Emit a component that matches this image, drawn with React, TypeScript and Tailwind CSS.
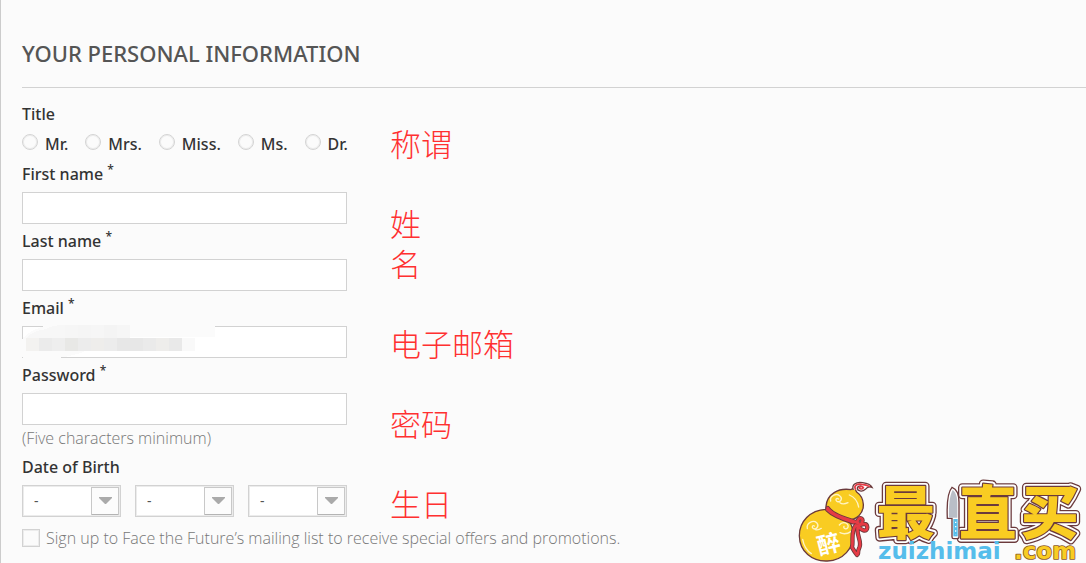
import { useId } from 'react'
import type { ReactNode } from 'react'

const TITLES = ['Mr.', 'Mrs.', 'Miss.', 'Ms.', 'Dr.']

// Colours of the pixelated blocks that hide the address, left to right.
const MOSAIC_TOP = ['#f6f6f6', '#f5f5f5', '#f6f6f6', '#f4f4f4', '#f6f6f6']
const MOSAIC_ROW = [
  '#f3f2f0',
  '#ebebeb',
  '#eeeeee',
  '#e8e8e6',
  '#ececec',
  '#eeedeb',
  '#ececec',
  '#e7e7e7',
  '#e7e7e7',
  '#eaeaea',
  '#eeedeb',
  '#e9e9e9',
  '#f9f9f9',
]

function Mosaic() {
  return (
    <svg
      className="pointer-events-none absolute -left-1 -top-2"
      width="200"
      height="46"
      shapeRendering="crispEdges"
      aria-hidden="true"
    >
      <path
        d="M36 6H197V19H70V32Q60 37 40 40V46H8Q-1 32 5 20Q14 10 36 6Z"
        fill="#fbfbfb"
      />
      <path d="M47 7V20H8Q14 13 28 11Q34 7 47 7Z" fill="#f7f7f7" />
      {MOSAIC_TOP.map((c, i) => (
        <rect key={i} x={47 + i * 13} y="7" width="13" height="13" fill={c} />
      ))}
      {MOSAIC_ROW.map((c, i) => (
        <rect key={i} x={8 + i * 13} y="20" width="13" height="13" fill={c} />
      ))}
    </svg>
  )
}

function Field({
  label,
  type = 'text',
  children,
}: {
  label: string
  type?: string
  children?: ReactNode
}) {
  const id = useId()

  return (
    <div className="mb-0.5">
      <label htmlFor={id} className="mb-[3px] block font-medium">
        {label} <sup className="text-xs">*</sup>
      </label>
      <div className="relative">
        <input
          id={id}
          type={type}
          className="block h-8 w-full border border-[#d2d2d2] bg-white px-3 text-sm outline-none"
        />
        {children}
      </div>
    </div>
  )
}

function DateSelect({ label }: { label: string }) {
  return (
    <div className="relative flex-1">
      <select
        aria-label={label}
        className="block h-8 w-full appearance-none border border-[#d2d2d2] bg-white pl-[11px] text-sm text-[#555] shadow-[inset_0_0_0_1px_#ececec] outline-none"
      >
        <option>-</option>
      </select>
      <svg
        className="pointer-events-none absolute right-0.5 top-0.5"
        width="28"
        height="28"
        aria-hidden="true"
      >
        <rect x=".5" y=".5" width="27" height="27" fill="#fcfcfc" stroke="#c8c8c8" />
        <path d="M1 27.5H27" stroke="#b4b4b4" />
        <path d="M8 10H21V11L15 17H14L8 11Z" fill="#aaa" />
      </svg>
    </div>
  )
}

// Painted bottom to top: outer rim, white band, face with its inner rim.
const GLYPH_LAYERS = [
  'fill-[#6b3a3c] stroke-[#6b3a3c] [stroke-width:26]',
  'fill-white stroke-white [stroke-width:18]',
  'fill-[#f9cc22] stroke-[#6b3a3c] [stroke-width:7] [paint-order:stroke]',
]

const RIBBON =
  'M113 99C126 119 158 129 205 144M190 142C164 134 130 123 112 104M201 143C206 119 227 131 213 147L203 155C217 145 231 143 232 157C231 174 212 166 202 151M197 151C181 171 191 200 186 217Q194 231 201 240M203 157C199 182 215 197 209 215Q204 225 204 236'

function Logo() {
  return (
    <svg
      className="absolute bottom-0 right-0"
      width="296"
      height="88"
      viewBox="0 0 888 264"
      role="img"
      aria-label="最值买 zuizhimai.com"
    >
      {/* gourd */}
      <g stroke="#6b3a3c" strokeWidth="4">
        <path
          d="M108 103C60 105 28 140 28 182C29 230 66 260 112 258C160 256 191 220 190 176C188 154 180 140 170 135C200 136 221 115 220 88C219 70 210 58 200 51L193 38L183 44C145 38 111 57 108 94Z"
          fill="#f9cc22"
        />
        <path
          d="M190 45C184 29 197 20 218 23C232 25 242 29 246 37C238 33 232 36 226 43C216 52 202 48 202 40C202 32 214 31 219 37"
          fill="#fff"
        />
      </g>
      <g fill="none" stroke="#e63b45" strokeWidth="5" strokeLinecap="round">
        <path d="M196 42C191 31 202 26 215 28Q230 29 238 34" />
        <path d="M207 38Q214 31 220 38Q214 46 207 38" />
      </g>
      <g fill="none" stroke="#fff4c4" strokeWidth="4" strokeLinecap="round">
        <path d="M122 78C118 62 139 54 149 62C160 70 151 84 141 79C134 74 140 68 146 72M150 83Q158 90 174 83" />
        <path d="M52 161C48 143 70 134 80 143C89 153 79 166 69 160C64 155 69 150 73 153M76 164Q86 166 94 160" />
        <path d="M148 150C158 137 178 144 174 157C170 166 158 160 162 154M150 173Q166 181 184 169" />
        <path d="M178 60Q201 69 206 96M38 193Q43 222 64 236" />
      </g>
      <g fill="none" strokeLinecap="round" strokeLinejoin="round">
        <path d={RIBBON} stroke="#6b3a3c" strokeWidth="13" />
        <path d={RIBBON} stroke="#e63b45" strokeWidth="8" />
      </g>
      <text
        x="82"
        y="232"
        transform="rotate(-14 118 210)"
        className="fill-white font-['Noto_Sans_CJK_SC',sans-serif] text-[69px] font-bold"
      >
        醉
      </text>

      {/* name */}
      {GLYPH_LAYERS.map((layer) => (
        <g
          key={layer}
          strokeLinejoin="round"
          className={`font-['Noto_Sans_CJK_SC',sans-serif] text-[174px] font-black ${layer}`}
        >
          <text x="260" y="177">
            最
          </text>
          <text x="506" y="177">
            直
          </text>
          <text x="692" y="177">
            买
          </text>
        </g>
      ))}

      {/* knife */}
      <path
        d="M486 37C500 42 507 60 507 82V186Q507 191 501 191H491Q486 191 486 186V130H472C470 86 474 50 486 37Z"
        fill="#fff"
        stroke="#6b3a3c"
        strokeWidth="4"
      />
      <path d="M488 45C498 52 502 68 502 86V128H477C476 89 479 61 488 45Z" fill="#b9bec7" />
      <path d="M490 132H503V184H490Z" fill="#55bdeb" />
      <path d="M497 140V180" stroke="#fff" strokeWidth="4" strokeDasharray="4 9" />

      {/* address */}
      <text
        x="264"
        y="251"
        className="fill-[#55bdeb] font-['DejaVu_Sans',sans-serif] text-[69px] font-bold"
      >
        zuizhimai
      </text>
      <text
        x="672"
        y="251"
        strokeLinejoin="round"
        className="fill-[#f9cc22] stroke-[#8a5a2c] stroke-[5] font-['DejaVu_Sans',sans-serif] text-[69px] font-bold [paint-order:stroke]"
      >
        .com
      </text>
    </svg>
  )
}

function Notes() {
  return (
    <div className="pt-6 font-['Noto_Sans_CJK_SC',sans-serif] text-[31px] font-light leading-10 text-[#ff3030]">
      <p className="mb-10">称谓</p>
      <p>姓</p>
      <p className="mb-10">名</p>
      <p className="mb-10">电子邮箱</p>
      <p className="mb-10">密码</p>
      <p>生日</p>
    </div>
  )
}

export default function App() {
  return (
    <main className="relative min-h-screen overflow-hidden border-l border-[#ccc] bg-[#fbfbfb] pl-[21px] font-['Noto_Sans',sans-serif] text-base leading-[30px] text-[#333]">
      <h1 className="mb-[11px] border-b border-[#d2d2d2] pb-[19px] pt-[38px] text-[22px] font-medium uppercase text-[#555]">
        Your personal information
      </h1>
      <form>
        <div className="flex gap-[43px]">
          <div className="w-[325px] shrink-0">
            <fieldset>
              <legend className="font-medium">Title</legend>
              <div className="flex gap-[17px] whitespace-nowrap font-medium">
                {TITLES.map((title) => (
                  <label key={title} className="flex gap-[7px]">
                    <input
                      type="radio"
                      name="title"
                      className="mt-[5px] size-4 shrink-0 appearance-none rounded-full border border-[#d4d4d4] bg-[#fbfbfb] shadow-[inset_0_0_0_1px_#ececec]"
                    />
                    {title}
                  </label>
                ))}
              </div>
            </fieldset>
            <Field label="First name" />
            <Field label="Last name" />
            <Field label="Email" type="email">
              <Mosaic />
            </Field>
            <Field label="Password" type="password" />
            <p className="mb-[3px] font-['Open_Sans',sans-serif] font-light leading-[22px] text-[#777]">
              (Five characters minimum)
            </p>
            <fieldset>
              <legend className="mb-[3px] font-medium">Date of Birth</legend>
              <div className="flex gap-3.5">
                <DateSelect label="Day" />
                <DateSelect label="Month" />
                <DateSelect label="Year" />
              </div>
            </fieldset>
          </div>
          <Notes />
        </div>
        <label className="flex items-center gap-1.5 font-['Open_Sans',sans-serif] font-light text-[#777]">
          <input
            type="checkbox"
            className="size-[18px] appearance-none border border-[#d2d2d2] bg-[#fbfbfb] shadow-[inset_0_0_0_1px_#ececec]"
          />
          Sign up to Face the Future’s mailing list to receive special offers and promotions.
        </label>
      </form>
      <Logo />
    </main>
  )
}
